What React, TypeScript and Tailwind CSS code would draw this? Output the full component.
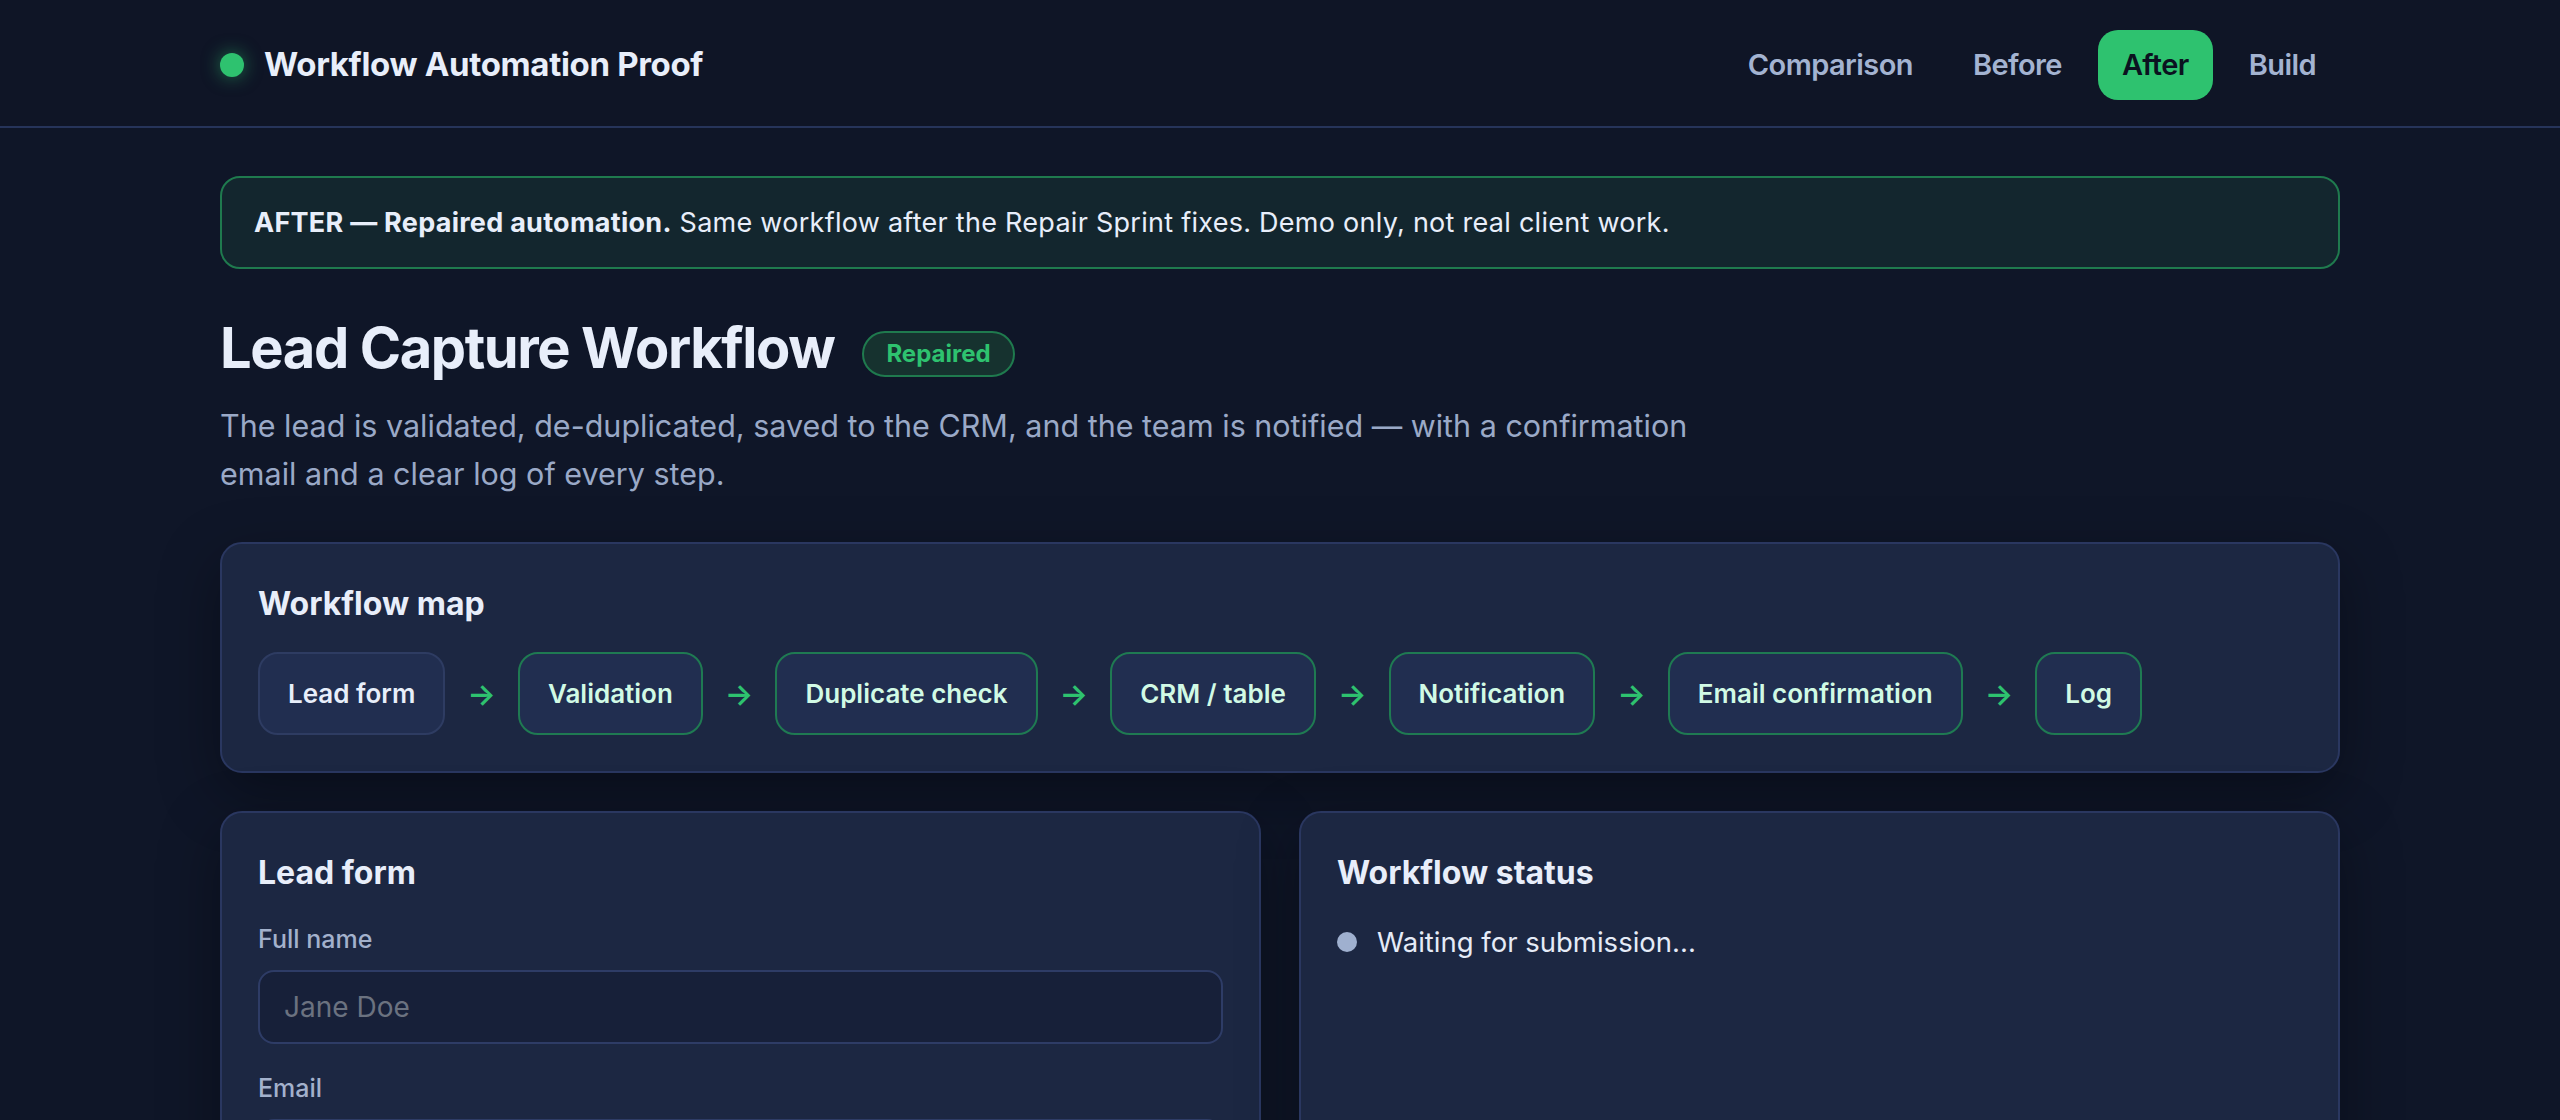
import React from "react";

const STEPS = [
  "Lead form",
  "Validation",
  "Duplicate check",
  "CRM / table",
  "Notification",
  "Email confirmation",
  "Log",
];

const NAV = ["Comparison", "Before", "After", "Build"];

export default function App() {
  return (
    <div
      className="min-h-screen bg-[#0f1628] text-[#e8eefa]"
      style={{ fontFamily: "Inter, 'Noto Sans', 'Liberation Sans', sans-serif" }}
    >
      {/* Header */}
      <header className="border-b-2 border-[#26345a] bg-[#0f1526]">
        <div className="mx-auto flex h-[126px] max-w-[2200px] items-center justify-between px-[40px] pt-[3px]">
          <div className="flex items-center gap-5">
            <span className="size-6 rounded-full bg-[#2ec26f] shadow-[0_0_18px_rgba(46,194,111,0.55)]" />
            <span className="text-[33px] font-bold tracking-[-0.01em] text-[#e8eefa]">
              Workflow Automation Proof
            </span>
          </div>
          <nav className="flex items-center gap-3">
            {NAV.map((item) => (
              <a
                key={item}
                className={`flex h-[70px] items-center rounded-[20px] px-6 text-[29px] font-semibold tracking-[-0.02em] ${
                  item === "After" ? "bg-[#2ec26f] text-[#0b1220]" : "text-[#a3b3d1]"
                }`}
              >
                {item}
              </a>
            ))}
          </nav>
        </div>
      </header>

      <main className="mx-auto max-w-[2200px] px-[40px] pt-[48px] pb-[80px]">
        {/* Banner */}
        <div className="rounded-[20px] border-2 border-[#1f7a4e] bg-[#13262e] px-[32px] py-[25px] text-[27px] leading-[39px] tracking-[0.01em] text-[#e8eefa]">
          <strong className="font-bold">AFTER — Repaired automation.</strong> Same workflow after the
          Repair Sprint fixes. Demo only, not real client work.
        </div>

        {/* Title */}
        <div className="mt-[46px] flex items-center gap-[28px]">
          <h1 className="text-[56px] font-bold leading-[1.2] tracking-[-0.025em] text-[#e8eefa]">
            Lead Capture Workflow
          </h1>
          <span className="mt-[10px] flex h-[46px] items-center rounded-full border-2 border-[#1f7a4e] bg-[#16322f] px-[22px] text-[24px] font-bold text-[#2ec26f]">
            Repaired
          </span>
        </div>
        <p className="mt-[20px] max-w-[1500px] text-[30.5px] leading-[48px] text-[#9aa9c7]">
          The lead is validated, de-duplicated, saved to the CRM, and the team is notified — with a
          confirmation email and a clear log of every step.
        </p>

        {/* Workflow map */}
        <section className="mt-[44px] rounded-[22px] border-2 border-[#2a3760] bg-[#1c2742] p-[36px] shadow-[0_20px_60px_rgba(0,0,0,0.35)]">
          <h2 className="text-[32px] font-bold leading-[48px] text-[#e8eefa]">Workflow map</h2>
          <div className="mt-[24px] flex flex-wrap items-center gap-[22px]">
            {STEPS.map((step, i) => (
              <React.Fragment key={step}>
                {i > 0 && (
                  <span className="text-[30px] font-semibold leading-none text-[#2ec26f]">→</span>
                )}
                <div
                  className={`rounded-[20px] border-2 bg-[#212e50] px-[28px] py-[20px] text-[26px] font-semibold leading-[39px] ${
                    i === 0 ? "border-[#2e3c62] text-[#e8eefa]" : "border-[#1f7a52] text-[#d1fae5]"
                  }`}
                >
                  {step}
                </div>
              </React.Fragment>
            ))}
          </div>
        </section>

        {/* Form + status */}
        <div className="mt-[38px] grid grid-cols-2 gap-[38px]">
          <section className="rounded-[22px] border-2 border-[#2a3760] bg-[#1c2742] p-[36px] shadow-[0_20px_60px_rgba(0,0,0,0.35)]">
            <h2 className="text-[32px] font-bold leading-[48px] text-[#e8eefa]">Lead form</h2>
            <div className="mt-[24px] flex flex-col gap-[26px]">
              {[
                { label: "Full name", placeholder: "Jane Doe" },
                { label: "Email", placeholder: "jane@example.com" },
                { label: "Company", placeholder: "Acme Inc." },
              ].map((field) => (
                <label key={field.label} className="flex flex-col gap-[13px]">
                  <span className="text-[25px] font-medium leading-[36px] text-[#a3b1cc]">
                    {field.label}
                  </span>
                  <input
                    placeholder={field.placeholder}
                    className="h-[74px] rounded-[16px] border-2 border-[#2e3c66] bg-[#172039] px-[24px] text-[28px] text-[#e8eefa] placeholder:text-[#6b7280] outline-none"
                  />
                </label>
              ))}
              <button className="h-[74px] rounded-[16px] bg-[#2ec26f] text-[28px] font-semibold text-[#0b1220]">
                Submit lead
              </button>
            </div>
          </section>

          <section className="rounded-[22px] border-2 border-[#2a3760] bg-[#1c2742] p-[36px] shadow-[0_20px_60px_rgba(0,0,0,0.35)]">
            <h2 className="text-[32px] font-bold leading-[48px] text-[#e8eefa]">Workflow status</h2>
            <div className="mt-[24px] flex items-center gap-5">
              <span className="size-5 rounded-full bg-[#9fb0cf]" />
              <span className="text-[27.5px] leading-[42px] text-[#e5ebf7]">Waiting for submission...</span>
            </div>
          </section>
        </div>
      </main>
    </div>
  );
}
